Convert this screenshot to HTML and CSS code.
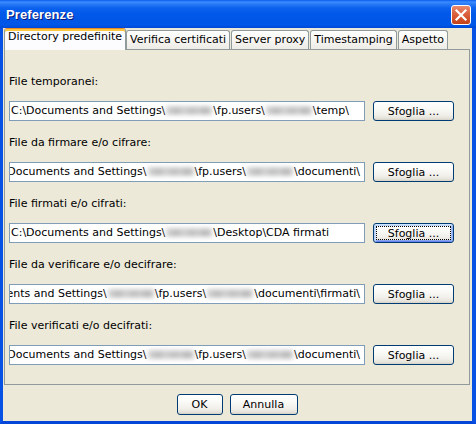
FILE: index.html
```html
<!DOCTYPE html>
<html lang="it">
<head>
<meta charset="utf-8">
<title>Preferenze</title>
<link rel="stylesheet" href="styles.css">
</head>
<body>
<div class="window">
  <div class="titlebar">
    <span class="title">Preferenze</span>
    <span class="close" aria-label="Chiudi">
      <svg viewBox="0 0 18 18" width="18" height="18"><path d="M4.5 4.5 L13.5 13.5 M13.5 4.5 L4.5 13.5" stroke="#fff" stroke-width="2.2" stroke-linecap="square"/></svg>
    </span>
  </div>
  <div class="client">
    <div class="tabs">
      <div class="tab active">Directory predefinite</div>
      <div class="tab">Verifica certificati</div>
      <div class="tab">Server proxy</div>
      <div class="tab">Timestamping</div>
      <div class="tab">Aspetto</div>
    </div>
    <div class="panel">
      <div class="group">
        <div class="label">File temporanei:</div>
        <div class="row">
          <div class="field"><span class="path">C:\Documents and Settings\<span class="blur"></span>\fp.users\<span class="blur"></span>\temp\</span></div>
          <button class="btn browse">Sfoglia ...</button>
        </div>
      </div>
      <div class="group">
        <div class="label">File da firmare e/o cifrare:</div>
        <div class="row">
          <div class="field scrolled"><span class="path">C:\Documents and Settings\<span class="blur"></span>\fp.users\<span class="blur"></span>\documenti\</span></div>
          <button class="btn browse">Sfoglia ...</button>
        </div>
      </div>
      <div class="group">
        <div class="label">File firmati e/o cifrati:</div>
        <div class="row">
          <div class="field"><span class="path">C:\Documents and Settings\<span class="blur"></span>\Desktop\CDA firmati</span></div>
          <button class="btn browse focused">Sfoglia ...</button>
        </div>
      </div>
      <div class="group">
        <div class="label">File da verificare e/o decifrare:</div>
        <div class="row">
          <div class="field scrolled"><span class="path">C:\Documents and Settings\<span class="blur"></span>\fp.users\<span class="blur"></span>\documenti\firmati\</span></div>
          <button class="btn browse">Sfoglia ...</button>
        </div>
      </div>
      <div class="group">
        <div class="label">File verificati e/o decifrati:</div>
        <div class="row">
          <div class="field scrolled"><span class="path">C:\Documents and Settings\<span class="blur"></span>\fp.users\<span class="blur"></span>\documenti\</span></div>
          <button class="btn browse">Sfoglia ...</button>
        </div>
      </div>
    </div>
    <div class="actions">
      <button class="btn ok">OK</button>
      <button class="btn cancel">Annulla</button>
    </div>
  </div>
</div>
</body>
</html>
```

FILE: styles.css
```css
* { box-sizing: border-box; }

html, body {
  margin: 0;
  padding: 0;
  background: #ECE9D8;
}

body {
  font-family: "DejaVu Sans", "Liberation Sans", sans-serif;
  font-size: 11px;
  color: #000;
}

.window {
  width: 476px;
  height: 424px;
  display: flex;
  flex-direction: column;
  background: #0A53E2;
}

.titlebar {
  height: 28px;
  flex: none;
  display: flex;
  align-items: center;
  padding: 0 5px 0 6px;
  background: linear-gradient(180deg,
    #0A5CEB 0px, #3B8CFF 2px, #2A7BF8 4px, #0C62EE 8px,
    #0058EA 14px, #0056E6 20px, #0057E8 25px, #0047D6 28px);
}

.title {
  font-family: "Liberation Sans", "DejaVu Sans", sans-serif;
  font-weight: bold;
  font-size: 13px;
  color: #fff;
  text-shadow: 1px 1px 0 #0A1A7A;
  letter-spacing: 0.1px;
  padding-top: 1px;
}

.close {
  margin-left: auto;
  width: 20px;
  height: 20px;
  border: 1px solid #fff;
  border-radius: 3px;
  background: linear-gradient(180deg, #EA8C6F 0%, #DE6746 35%, #D4522C 70%, #C24218 100%);
  display: flex;
  align-items: center;
  justify-content: center;
  margin-top: 1px;
}

.close svg { display: block; }

.client {
  flex: 1;
  background: #ECE9D8;
  border-left: 3px solid #0752E5;
  border-right: 4px solid #0752E5;
  border-bottom: 3px solid #0446D8;
  padding: 0 2px 0 1px;
  display: flex;
  flex-direction: column;
}

.tabs {
  height: 21px;
  display: flex;
  align-items: flex-end;
  position: relative;
  z-index: 1;
}

.tab {
  height: 19px;
  line-height: 18px;
  padding: 0 3px;
  border: 1px solid #919B9C;
  border-bottom: none;
  border-radius: 3px 3px 0 0;
  background: linear-gradient(180deg, #FFFFFF 0%, #F7F6F2 50%, #ECEBE6 100%);
  white-space: nowrap;
  margin-left: 1px;
}

.tab.active {
  height: 22px;
  margin-bottom: -1px;
  margin-left: 0;
  padding: 0 3px 3px 3px;
  line-height: 16px;
  background: #FCFCFE;
  border-top: 1px solid #E68B2C;
  box-shadow: inset 0 2px 0 #FFC73C;
  border-radius: 3px 3px 0 0;
}

.tab.active + .tab { margin-left: 0; }

.panel {
  border: 1px solid #919B9C;
  background: #ECE9D8;
  padding: 25px 15px 19px 4px;
  display: flex;
  flex-direction: column;
  gap: 15px;
}

.label {
  line-height: 14px;
  height: 14px;
  margin-bottom: 12px;
  white-space: nowrap;
}

.row {
  display: flex;
  align-items: center;
  gap: 8px;
}

.field {
  width: 356px;
  height: 20px;
  border: 1px solid #7F9DB9;
  background: #fff;
  padding: 0 4px 0 1px;
  line-height: 18px;
  overflow: hidden;
  white-space: nowrap;
  display: flex;
}

.field.scrolled {
  justify-content: flex-end;
}

.path {
  flex: none;
  white-space: nowrap;
}

.blur {
  display: inline-block;
  width: 46px;
  height: 9px;
  vertical-align: -1px;
  margin: 0 1px;
  background:
    radial-gradient(ellipse 8px 5px at 10px 5px, #B4B4B4, transparent),
    radial-gradient(ellipse 8px 5px at 26px 5px, #BABABA, transparent),
    radial-gradient(ellipse 8px 5px at 39px 5px, #B0B0B0, transparent),
    #D2D2D2;
  filter: blur(2px);
}

.btn {
  font-family: "DejaVu Sans", "Liberation Sans", sans-serif;
  font-size: 11px;
  color: #000;
  border: 1px solid #003C74;
  border-radius: 3px;
  background: linear-gradient(180deg, #FFFFFF 0%, #FBFBF9 30%, #F1F0EB 70%, #E5E3DA 90%, #D6D0C5 100%);
  padding: 0;
  margin: 0;
  line-height: 17px;
}

.btn.browse {
  width: 81px;
  height: 20px;
}

.btn.focused {
  box-shadow: inset 0 1px 0 #CEE7FF, inset 1px 0 0 #B8D2F7, inset -1px 0 0 #8FB0F4, inset 0 -1px 0 #6982EE,
              inset 0 2px 0 #BCD4F6, inset 2px 0 0 #C8DBF9, inset -2px 0 0 #A4C0F5, inset 0 -2px 0 #8AA6F0;
  outline: 1px dotted #000;
  outline-offset: -4px;
}

.actions {
  display: flex;
  justify-content: center;
  gap: 7px;
  padding-top: 9px;
}

.btn.ok {
  width: 46px;
  height: 21px;
}

.btn.cancel {
  width: 68px;
  height: 21px;
}
```
